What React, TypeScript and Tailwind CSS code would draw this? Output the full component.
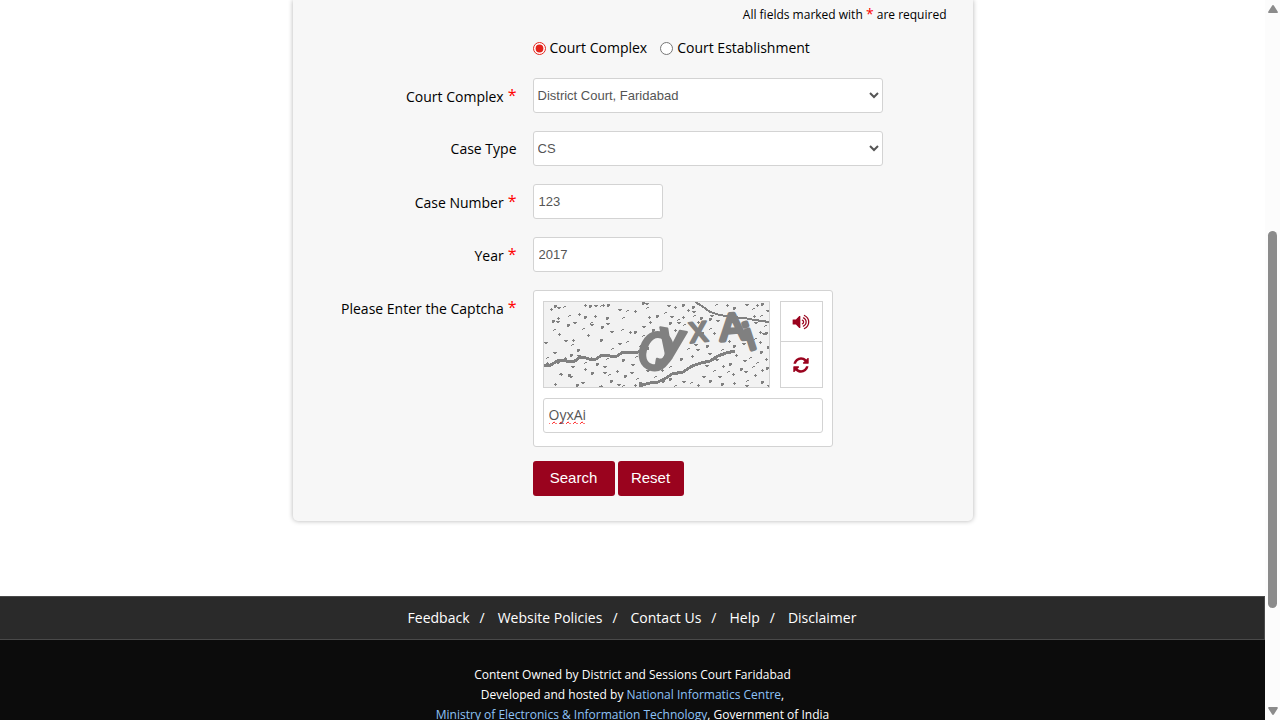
import React, { useState } from "react";

const SPECKLES =
  "7,7 11,4 14,5 20,4 41,3 46,4 51,3 57,3 59,3 64,3 75,7 83,8 91,9 99,1 102,1 103,5 14,16 9,19 13,19 25,13 35,12 41,15 47,22 47,20 51,14 63,16 63,21 79,15 105,15 113,14 1,40 10,27 15,32 24,23 30,20 39,26 44,33 58,25 67,29 78,27 86,30 91,30 99,24 99,33 106,20 109,28 21,38 28,42 29,38 57,38 75,41 83,39 96,44 34,48 10,50 3,55 21,56 27,53 34,53 68,46 3,61 14,60 28,64 41,60 47,56 53,62 60,64 63,56 72,54 79,58 88,62 92,54 17,72 25,73 26,74 16,71 41,67 48,71 60,70 65,72 73,69 81,74 87,70 93,76 11,82 33,83 38,80 55,84 57,84 67,79 74,82 79,83 91,83 96,81 103,68 111,74 118,68 119,79 124,3 121,10 131,5 139,3 127,14 134,17 144,8 149,5 149,9 150,13 139,15 157,16 167,13 172,2 183,3 190,6 202,2 209,6 213,3 218,2 223,8 217,13 210,14 126,21 134,20 140,22 154,20 166,17 173,18 166,26 170,31 158,31 211,20 221,23 216,30 222,31 219,31 119,25 131,28 163,44 153,47 144,46 148,54 137,57 165,51 178,47 185,39 190,44 199,41 211,36 216,40 224,45 172,57 181,51 192,53 217,50 151,42 126,64 134,70 148,64 159,74 170,68 179,64 186,62 200,58 213,60 222,57 126,77 139,79 147,80 154,83 166,79 175,74 184,69 189,72 197,67 201,69 209,64 218,68 223,66 202,83 203,78 211,73 218,80 224,83 131,83 190,81 178,82 162,63 206,55"
    .split(" ")
    .map((p) => p.split(",").map(Number));

function CaptchaImage() {
  return (
    <svg viewBox="0 0 225 85" className="block h-[85px] w-full" role="img" aria-label="Captcha image" shapeRendering="crispEdges">
      <g fill="#808080">
        {SPECKLES.map(([x, y], i) => (
          <path
            key={i}
            d={
              i % 4 === 0
                ? `M${x - 1} ${y}h3v1h-3zM${x} ${y - 1}h1v3h-1z`
                : i % 4 === 1
                  ? `M${x - 1} ${y - 1}h2v3h-2zM${x + 1} ${y - 1}h1v2h-1z`
                  : i % 4 === 2
                    ? `M${x - 1} ${y}h4v1h-1v1h-2v-1h-1z`
                    : `M${x} ${y}h2v1h-2zM${x - 1} ${y + 1}h1v1h-1z`
            }
          />
        ))}
      </g>
      <g fill="none" stroke="#808080" strokeLinejoin="round">
        <path strokeWidth="3" d="M0 63L5 64L10 61L15 58L19 58L26 60L31 59L36 55L42 56L48 58L52 57L58 53L63 53L69 55L73 54L79 50L86 50L92 51L98 48L105 46" />
        <path strokeWidth="3" d="M95 84L106 81L114 80L122 76L128 72L139 70L148 64L157 61L166 59L174 54L182 51L191 49" />
        <path strokeWidth="2" d="M151 0L158 4L166 10L176 13L188 15L200 16L211 18L225 20" />
      </g>
      <g fill="#808080" stroke="#808080" strokeLinejoin="round">
        <text x="94" y="67" fontSize="50" strokeWidth="3" fontFamily="Liberation Sans Narrow, DejaVu Sans Condensed, sans-serif" transform="rotate(20 111 50)">O</text>
        <text x="113" y="54" fontSize="50" fontWeight="700" strokeWidth="2" fontFamily="Liberation Sans, sans-serif" transform="rotate(10 128 43)">y</text>
        <text x="145" y="40" fontSize="38" strokeWidth="2" fontFamily="Liberation Sans, sans-serif" transform="rotate(-6 154 30)">x</text>
        <text x="176" y="38" fontSize="38" strokeWidth="4" fontFamily="Liberation Sans, sans-serif" transform="rotate(-4 188 26)">A</text>
        <text x="201" y="48" fontSize="38" strokeWidth="4" fontFamily="Liberation Sans, sans-serif" transform="rotate(-18 205 35)">i</text>
      </g>
    </svg>
  );
}

function VolumeIcon() {
  return (
    <svg viewBox="0 0 1792 1792" className="size-[18px]" fill="currentColor" aria-hidden="true">
      <path d="M832 352v1088q0 26-19 45t-45 19-45-19l-333-333h-262q-26 0-45-19t-19-45v-384q0-26 19-45t45-19h262l333-333q19-19 45-19t45 19 19 45zm384 544q0 76-42.5 141.5t-112.5 93.5q-10 5-25 5-26 0-45-18.5t-19-45.5q0-21 12-35.5t29-25 34-23 29-36 12-56.5-12-56.5-29-36-34-23-29-25-12-35.5q0-27 19-45.5t45-18.5q15 0 25 5 70 27 112.5 93t42.5 142zm256 0q0 153-85 282.5t-225 188.5q-13 5-25 5-27 0-46-19t-19-45q0-39 39-59 56-29 76-44 74-54 115.5-135.5t41.5-173.5-41.5-173.5-115.5-135.5q-20-15-76-44-39-20-39-59 0-26 19-45t45-19q13 0 26 5 140 59 225 188.5t85 282.5zm256 0q0 230-127 422.5t-338 283.5q-13 5-26 5-26 0-45-19t-19-45q0-36 39-59 7-4 22.5-10.5t22.5-10.5q46-25 82-51 123-91 192-227t69-289-69-289-192-227q-36-26-82-51-7-4-22.5-10.5t-22.5-10.5q-39-23-39-59 0-26 19-45t45-19q13 0 26 5 211 91 338 283.5t127 422.5z" />
    </svg>
  );
}

function RefreshIcon() {
  return (
    <svg viewBox="0 0 1792 1792" className="size-[18px]" fill="currentColor" aria-hidden="true">
      <path d="M1639 1056q0 5-1 7-64 268-268 434.5t-478 166.5q-146 0-282.5-55t-243.5-157l-129 129q-19 19-45 19t-45-19-19-45v-448q0-26 19-45t45-19h448q26 0 45 19t19 45-19 45l-137 137q71 66 161 102t187 36q134 0 250-65t186-179q11-17 53-117 8-23 30-23h192q13 0 22.5 9.5t9.5 22.5zm25-800v448q0 26-19 45t-45 19h-448q-26 0-45-19t-19-45 19-45l138-138q-148-137-349-137-134 0-250 65t-186 179q-11 17-53 117-8 23-30 23h-199q-13 0-22.5-9.5t-9.5-22.5v-7q65-268 270-434.5t480-166.5q146 0 284 55.5t245 156.5l130-129q19-19 45-19t45 19 19 45z" />
    </svg>
  );
}

function Star() {
  return <span className="pb-1 text-base leading-none text-[#f00]">*</span>;
}

function Row({ label, htmlFor, required, children }: { label: string; htmlFor: string; required?: boolean; children: React.ReactNode }) {
  return (
    <div className="grid grid-cols-[224px_1fr] gap-4">
      <label htmlFor={htmlFor} className={`flex h-[35px] items-center justify-end gap-1 text-sm ${required ? "pt-[2px]" : ""}`}>
        {label}
        {required && <Star />}
      </label>
      <div>{children}</div>
    </div>
  );
}

const field = "block h-[35px] rounded-[3px] border border-[#d3d3d3] bg-white text-[13px] text-[#555] font-['Liberation_Sans',Arial,sans-serif]";
const action = "flex h-[35px] items-center justify-center rounded-[3px] bg-[#9a031e] text-[15px] text-white font-['Liberation_Sans',Arial,sans-serif]";

const LINKS = ["Feedback", "Website Policies", "Contact Us", "Help", "Disclaimer"];

export default function App() {
  const [mode, setMode] = useState("complex");
  return (
    <div className="flex h-screen overflow-hidden bg-white font-['Open_Sans','Noto_Sans',sans-serif] text-black">
      <div className="min-w-0 flex-1 overflow-hidden">
        <main className="pb-[75px]">
          <form
            onSubmit={(e) => e.preventDefault()}
            className="mx-auto max-w-[680px] rounded-b-[5px] bg-[#f7f7f7] pt-[5px] pb-[25px] shadow-[0_0_5px_rgba(0,0,0,0.3)]"
          >
            <p className="pr-[26px] text-right text-xs leading-5">
              All fields marked with <span className="text-sm leading-none text-[#f00]">*</span> are required
            </p>
            <div className="mt-[13px] mb-5 flex h-5 items-center gap-[13px] pl-[240px] text-sm">
              <label className="flex items-center gap-1">
                <input type="radio" name="mode" className="size-[13px] accent-[#e3231b]" checked={mode === "complex"} onChange={() => setMode("complex")} />
                Court Complex
              </label>
              <label className="flex items-center gap-1">
                <input type="radio" name="mode" className="size-[13px] accent-[#e3231b]" checked={mode === "establishment"} onChange={() => setMode("establishment")} />
                Court Establishment
              </label>
            </div>
            <div className="flex flex-col gap-[18px]">
              <Row label="Court Complex" htmlFor="complex" required>
                <select id="complex" className={`${field} w-[350px]`}>
                  <option>District Court, Faridabad</option>
                </select>
              </Row>
              <Row label="Case Type" htmlFor="type">
                <select id="type" className={`${field} w-[350px]`}>
                  <option>CS</option>
                </select>
              </Row>
              <Row label="Case Number" htmlFor="number" required>
                <input id="number" className={`${field} w-[130px] px-[5px]`} defaultValue="123" />
              </Row>
              <Row label="Year" htmlFor="year" required>
                <input id="year" className={`${field} w-[130px] px-[5px]`} defaultValue="2017" />
              </Row>
              <Row label="Please Enter the Captcha" htmlFor="captcha" required>
                <div className="w-[300px] rounded-[3px] border border-[#d3d3d3] bg-white px-[9px] pt-[10px] pb-[13px]">
                  <div className="flex gap-[10px]">
                    <div className="flex-1 border border-[#d3d3d3] bg-[#f2f2f2]">
                      <CaptchaImage />
                    </div>
                    <div className="flex w-[43px] flex-col border border-[#d3d3d3] text-[#9a031e]">
                      <button type="button" aria-label="Play captcha" className="flex h-10 items-center justify-center border-b border-[#d3d3d3] pr-px">
                        <VolumeIcon />
                      </button>
                      <button type="button" aria-label="Refresh captcha" className="flex flex-1 items-center justify-center pr-px">
                        <RefreshIcon />
                      </button>
                    </div>
                  </div>
                  <input
                    id="captcha"
                    spellCheck={false}
                    className="mt-[10px] block h-[35px] w-full rounded-[3px] border border-[#d3d3d3] bg-white px-[5px] pb-[2px] text-sm text-[#555] underline decoration-[#f00] decoration-wavy decoration-1 [text-decoration-skip-ink:none]"
                    defaultValue="OyxAi"
                  />
                </div>
              </Row>
            </div>
            <div className="mt-[14px] flex gap-[3px] pl-[240px]">
              <button type="submit" className={`${action} w-[82px]`}>Search</button>
              <button type="reset" className={`${action} w-[66px]`}>Reset</button>
            </div>
          </form>
        </main>
        <footer>
          <nav className="flex h-11 items-center justify-center border border-l-0 border-[#494949] bg-[#2a2a2a] text-sm text-white">
            {LINKS.map((l, i) => (
              <React.Fragment key={l}>
                {i > 0 && <span className="mr-[13px] ml-[10px]">/</span>}
                <a href="#">{l}</a>
              </React.Fragment>
            ))}
          </nav>
          <div className="bg-[#0c0c0c] pt-[25px] pb-8 text-center text-xs leading-5 text-white">
            <p>Content Owned by District and Sessions Court Faridabad</p>
            <p>
              Developed and hosted by <a href="#" className="text-[#8fc3f7]">National Informatics Centre</a>,
            </p>
            <p>
              <a href="#" className="text-[#8fc3f7]">Ministry of Electronics &amp; Information Technology</a>, Government of India
            </p>
          </div>
        </footer>
      </div>
      <div className="flex w-[15px] flex-col items-center justify-between bg-[#fcfcfc] py-[5px] text-[#8b8b8b]" aria-hidden="true">
        <svg viewBox="0 0 10 8" className="h-2 w-[10px]" fill="currentColor">
          <path d="M5 0Q5.600 0 6 .7L9.800 6.800Q10 8 9 8H1Q0 8 .2 6.800L4 .7Q4.400 0 5 0z" />
        </svg>
        <div className="flex w-[9px] flex-1 flex-col pt-[218px] pb-[99px]">
          <div className="flex-1 rounded-full bg-[#8b8b8b]" />
        </div>
        <svg viewBox="0 0 10 8" className="h-2 w-[10px]" fill="currentColor">
          <path d="M5 8Q4.400 8 4 7.300L.2 1.200Q0 0 1 0H9Q10 0 9.800 1.200L6 7.300Q5.600 8 5 8z" />
        </svg>
      </div>
    </div>
  );
}
